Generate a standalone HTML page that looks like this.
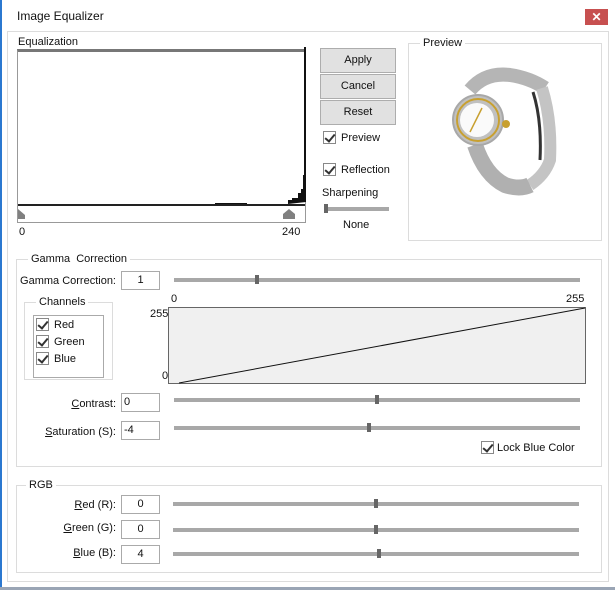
<!DOCTYPE html>
<html><head><style>
*{margin:0;padding:0;box-sizing:border-box}
body{width:615px;height:590px;background:#fff;font-family:"Liberation Sans",sans-serif;font-size:11px;color:#111;position:relative;overflow:hidden}
.a{position:absolute;line-height:13px}
.gb{position:absolute;border:1px solid #dcdcdc}
.lg{position:absolute;background:#fff;padding:0 3px;line-height:13px}
.btn{position:absolute;left:320px;width:76px;height:25px;background:#e1e1e1;border:1px solid #adadad;text-align:center;line-height:23px}
.cb{position:absolute;width:13px;height:13px;border:1px solid #888;background:#fff}
.cb:after{content:"";position:absolute;left:3px;top:0px;width:4px;height:8px;border:solid #333;border-width:0 2px 2px 0;transform:rotate(40deg)}
.inp{position:absolute;left:121px;width:39px;height:19px;border:1px solid #aaa;background:#fff;line-height:17px;text-align:center}
.sl{position:absolute;height:4px;background:#a8a8a8}
.th{position:absolute;width:4px;height:9px;background:#666}
.lb{position:absolute;text-align:right;width:110px;left:6px;line-height:13px}
u{text-decoration:underline}
</style></head><body>
<div class="a" style="left:0;top:0;width:2px;height:590px;background:#2b78d0"></div>
<div class="a" style="left:0;top:587px;width:615px;height:3px;background:#9aa5b5"></div>
<div class="a" style="left:17px;top:10px;font-size:12px">Image Equalizer</div>
<div class="a" style="left:585px;top:9px;width:23px;height:16px;background:#c75050;color:#fff;text-align:center;font-weight:bold;line-height:16px;font-size:12px">✕</div>
<div class="gb" style="left:7px;top:31px;width:602px;height:551px"></div>

<div class="a" style="left:18px;top:36px">Equalization</div>
<div class="a" style="left:17px;top:49px;width:289px;height:174px;border:1px solid #999;border-top:3px solid #777;background:#fff"></div>
<div class="a" style="left:18px;top:204px;width:287px;height:2px;background:#222"></div>
<svg class="a" style="left:0;top:0" width="615" height="240">
<path d="M215 204h32v-1h-32z M288 204v-4h4v-2h6v-5h3v-4h2v-14h1v-128h2v155z" fill="#111"/>
<path d="M18 209l7 6v4h-7z" fill="#808080"/>
<path d="M283 219v-5l6-5 6 5v5z" fill="#808080"/>
</svg>
<div class="a" style="left:19px;top:226px">0</div>
<div class="a" style="left:282px;top:226px">240</div>

<div class="btn" style="top:48px">Apply</div>
<div class="btn" style="top:74px">Cancel</div>
<div class="btn" style="top:100px">Reset</div>
<div class="cb" style="left:323px;top:131px"></div><div class="a" style="left:341px;top:132px">Preview</div>
<div class="cb" style="left:323px;top:163px"></div><div class="a" style="left:341px;top:164px">Reflection</div>
<div class="a" style="left:322px;top:187px">Sharpening</div>
<div class="sl" style="left:324px;top:207px;width:65px"></div><div class="th" style="left:324px;top:204px;height:9px"></div>
<div class="a" style="left:343px;top:219px">None</div>

<div class="gb" style="left:408px;top:43px;width:194px;height:198px"></div>
<div class="lg" style="left:420px;top:37px">Preview</div>
<svg class="a" style="left:430px;top:60px" width="150" height="150">
<path d="M40 30 Q55 12 80 15 Q100 18 115 28" fill="none" stroke="#b5b5b5" stroke-width="14"/>
<path d="M112 28 Q122 60 120 100 Q115 115 100 125" fill="none" stroke="#c4c4c4" stroke-width="12"/>
<path d="M103 32 Q112 60 110 100" fill="none" stroke="#333" stroke-width="3"/>
<path d="M45 85 Q55 115 75 125 Q90 130 100 125" fill="none" stroke="#b0b0b0" stroke-width="16"/>
<circle cx="48" cy="60" r="25" fill="#c0c0c0" stroke="#a8a8a8" stroke-width="2"/>
<circle cx="48" cy="60" r="21" fill="none" stroke="#c8a030" stroke-width="2"/>
<circle cx="47" cy="60" r="17" fill="#fafafa"/>
<path d="M46 60 L40 72 M46 60 L52 48" stroke="#c8a030" stroke-width="1.5"/>
<circle cx="76" cy="64" r="4" fill="#c8a030"/>
</svg>

<div class="gb" style="left:16px;top:259px;width:586px;height:208px"></div>
<div class="lg" style="left:28px;top:253px">Gamma&nbsp; Correction</div>
<div class="lb" style="top:275px">Gamma Correction:</div>
<div class="inp" style="top:271px">1</div>
<div class="sl" style="left:174px;top:278px;width:406px"></div><div class="th" style="left:255px;top:275px"></div>

<div class="gb" style="left:24px;top:302px;width:89px;height:78px"></div>
<div class="lg" style="left:36px;top:296px">Channels</div>
<div class="a" style="left:33px;top:315px;width:71px;height:63px;border:1px solid #aaa"></div>
<div class="cb" style="left:36px;top:318px"></div><div class="a" style="left:54px;top:319px">Red</div>
<div class="cb" style="left:36px;top:335px"></div><div class="a" style="left:54px;top:336px">Green</div>
<div class="cb" style="left:36px;top:352px"></div><div class="a" style="left:54px;top:353px">Blue</div>

<div class="a" style="left:171px;top:293px">0</div>
<div class="a" style="left:566px;top:293px">255</div>
<div class="a" style="left:150px;top:308px">255</div>
<div class="a" style="left:162px;top:370px">0</div>
<div class="a" style="left:168px;top:307px;width:418px;height:77px;background:#f0f0f0;border:1px solid #666"></div>
<svg class="a" style="left:0;top:0" width="615" height="400"><line x1="179" y1="383" x2="585" y2="308" stroke="#111" stroke-width="1"/></svg>

<div class="lb" style="top:398px"><u>C</u>ontrast:</div>
<div class="inp" style="top:393px;text-align:left;padding-left:2px">0</div>
<div class="sl" style="left:174px;top:398px;width:406px"></div><div class="th" style="left:375px;top:395px"></div>
<div class="lb" style="top:426px"><u>S</u>aturation (S):</div>
<div class="inp" style="top:421px;text-align:left;padding-left:2px">-4</div>
<div class="sl" style="left:174px;top:426px;width:406px"></div><div class="th" style="left:367px;top:423px"></div>
<div class="cb" style="left:481px;top:441px"></div><div class="a" style="left:497px;top:442px">Lock Blue Color</div>

<div class="gb" style="left:16px;top:485px;width:586px;height:88px"></div>
<div class="lg" style="left:26px;top:479px">RGB</div>
<div class="lb" style="top:499px"><u>R</u>ed (R):</div>
<div class="inp" style="top:495px">0</div>
<div class="sl" style="left:173px;top:502px;width:406px"></div><div class="th" style="left:374px;top:499px"></div>
<div class="lb" style="top:522px"><u>G</u>reen (G):</div>
<div class="inp" style="top:520px">0</div>
<div class="sl" style="left:173px;top:528px;width:406px"></div><div class="th" style="left:374px;top:525px"></div>
<div class="lb" style="top:547px"><u>B</u>lue (B):</div>
<div class="inp" style="top:545px">4</div>
<div class="sl" style="left:173px;top:552px;width:406px"></div><div class="th" style="left:377px;top:549px"></div>
</body></html>
